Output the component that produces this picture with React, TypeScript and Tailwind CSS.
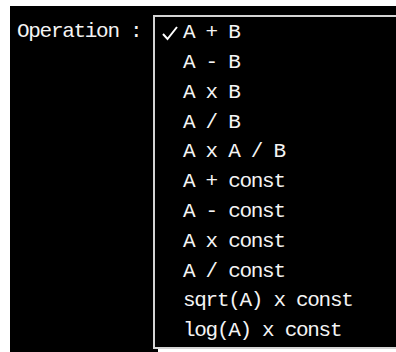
import React from "react";

const items = [
  "A + B",
  "A - B",
  "A x B",
  "A / B",
  "A x A / B",
  "A + const",
  "A - const",
  "A x const",
  "A / const",
  "sqrt(A) x const",
  "log(A) x const",
];

export default function App() {
  return (
    <div className="w-[396px] h-[352px] bg-white relative overflow-hidden" style={{ fontFamily: '"Liberation Mono", "DejaVu Sans Mono", monospace' }}>
      <div className="absolute left-[10px] top-[6px] right-0 bottom-0 bg-black">
        <div className="pl-[7px] pt-[14px] text-[#f4f4f4] text-[21px] tracking-[-1.3px] leading-[24px] whitespace-pre">Operation :</div>
      </div>
      <div className="absolute left-[153px] top-[15px] w-[260px] h-[334px] bg-black border-2 border-[#d4d4d4] shadow-[5px_3px_0_#ffffff]">
        <div className="pt-[1px]">
          {items.map((t, i) => (
            <div key={i} className="h-[29.8px] flex items-center text-[#f4f4f4] text-[21px] tracking-[-1.3px] whitespace-pre relative">
              <div className="w-[28px] flex items-center justify-center shrink-0">
                {i === 0 && (
                  <svg width="18" height="16" viewBox="0 0 18 16" className="ml-[2px]">
                    <path d="M2 9 L6.5 14 L16 2" stroke="#fff" strokeWidth="2" fill="none" />
                  </svg>
                )}
              </div>
              <span>{t}</span>
            </div>
          ))}
        </div>
      </div>
    </div>
  );
}
